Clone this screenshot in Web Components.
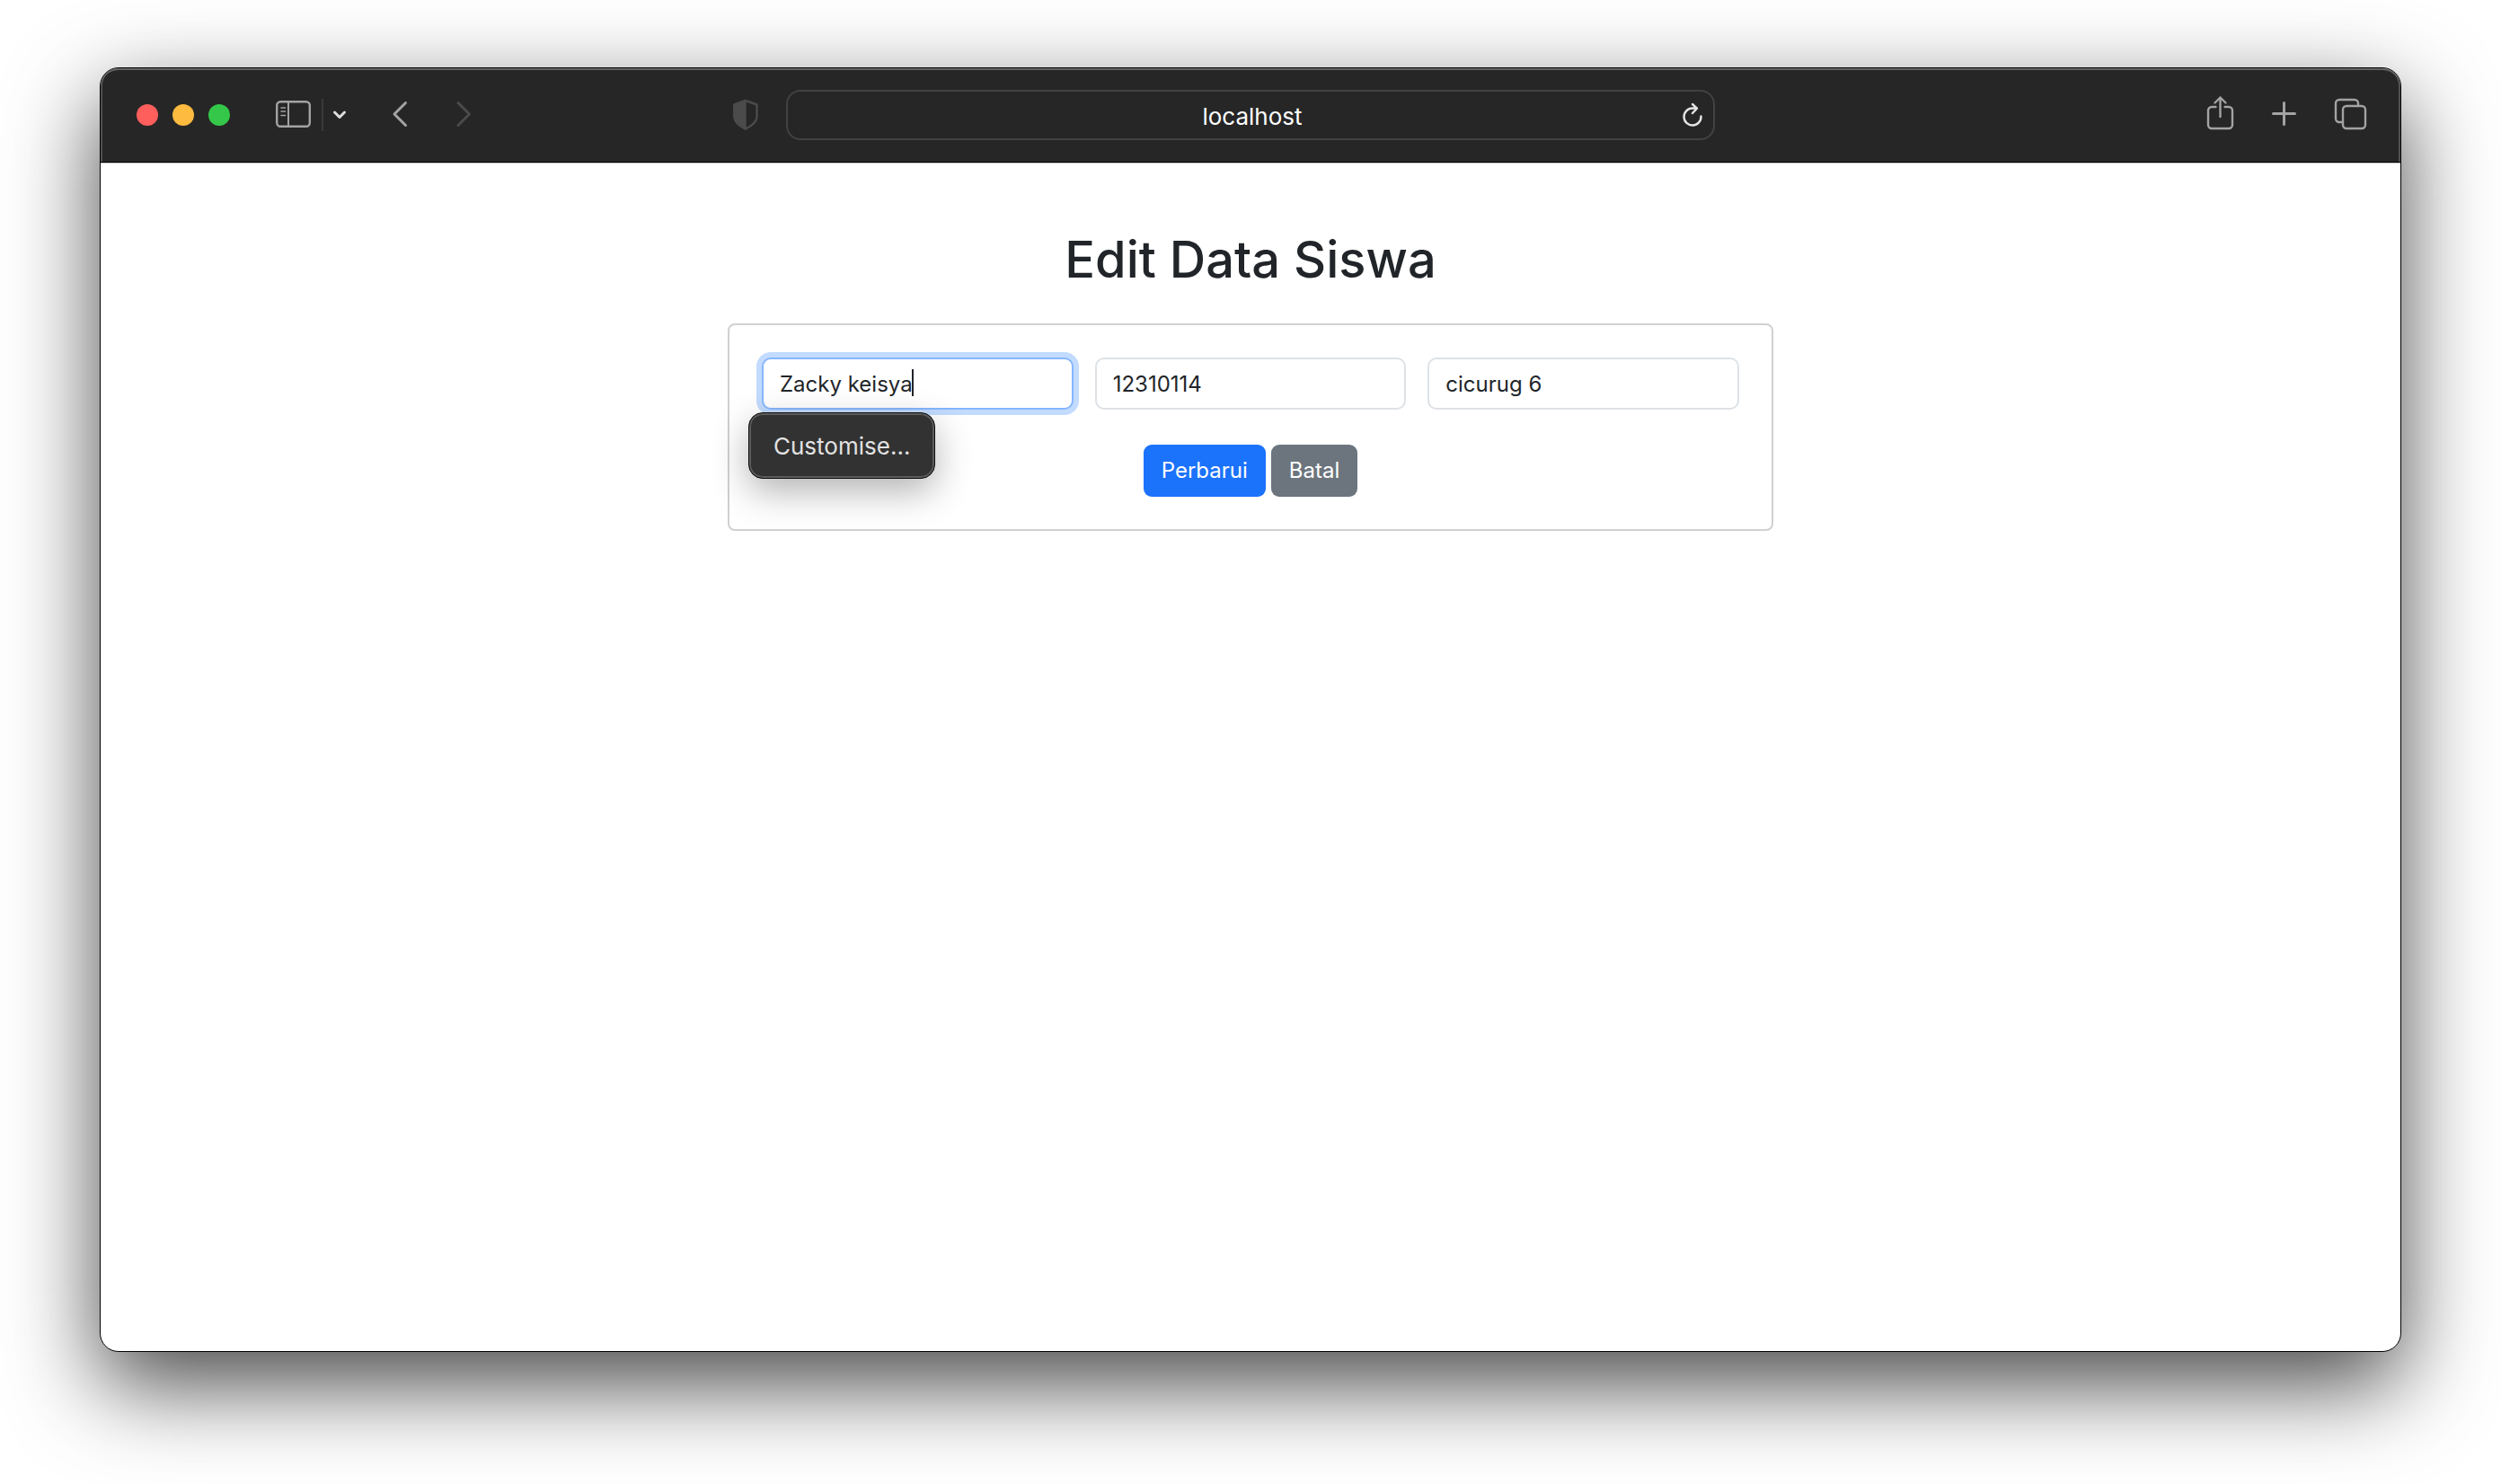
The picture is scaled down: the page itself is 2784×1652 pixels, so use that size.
<!DOCTYPE html>
<html lang="id">
<head>
<meta charset="utf-8">
<meta name="viewport" content="width=device-width, initial-scale=1">
<title>Edit Data Siswa</title>
<style>
  html { background: #fff; }
  body {
    margin: 0;
    min-height: 100vh;
    box-sizing: border-box;
    padding: 75px 111px 147px;
    display: flex;
    flex-direction: column;
    font-family: Inter, "Liberation Sans", sans-serif;
    font-size: 24px;
    line-height: 36px;
    color: #212529;
    overflow: hidden;
  }
</style>
</head>
<body>
<browser-window>
  <browser-toolbar slot="toolbar" address="localhost"></browser-toolbar>
  <student-form heading="Edit Data Siswa">
    <text-field label="Nama" value="Zacky keisya" active>
      <autofill-menu slot="menu">Customise…</autofill-menu>
    </text-field>
    <text-field label="NIS" value="12310114"></text-field>
    <text-field label="Rayon" value="cicurug 6"></text-field>
    <action-button slot="actions" variant="primary">Perbarui</action-button>
    <action-button slot="actions" variant="secondary">Batal</action-button>
  </student-form>
</browser-window>

<script>
  class BaseElement extends HTMLElement {
    constructor() {
      super();
      this.attachShadow({ mode: "open" });
    }
    connectedCallback() {
      this.shadowRoot.innerHTML = this.render();
      this.ready();
    }
    ready() {}
  }

  customElements.define("browser-window", class extends BaseElement {
    render() {
      return `
        <style>
          :host {
            flex: 1;
            display: flex;
            flex-direction: column;
            border: 1px solid #000;
            border-radius: 21px;
            background: #fff;
            box-shadow: 0 36px 100px rgba(0, 0, 0, .72);
          }
          main { flex: 1; padding: 72px 24px; }
        </style>
        <slot name="toolbar"></slot>
        <main><slot></slot></main>`;
    }
  });

  customElements.define("browser-toolbar", class extends BaseElement {
    render() {
      return `
        <style>
          :host {
            display: grid;
            grid-template-columns: 1fr minmax(0, 1034px) 1fr;
            align-items: center;
            height: 104px;
            background: #262626;
            border-radius: 20px 20px 0 0;
            border-bottom: 1px solid #000;
            box-shadow: inset 0 2px #646464, inset 2px 0 #505050, inset -2px 0 #505050, 0 1px #bfbfbf;
            color: #a3a3a3;
          }
          .side { display: flex; align-items: center; }
          .start { padding-left: 40px; padding-right: 31px; }
          .end { justify-content: flex-end; gap: 40px; padding-right: 36px; }
          .lights { display: flex; gap: 16px; margin-right: 51px; }
          .lights i { width: 24px; height: 24px; border-radius: 50%; }
          .red { background: #ff5f5c; }
          .yellow { background: #fdbb40; }
          .green { background: #34c749; }
          button { display: block; margin: 0; padding: 0; border: 0; background: none; color: inherit; }
          svg { display: block; fill: none; stroke: currentColor; stroke-width: 2.4; stroke-linecap: round; stroke-linejoin: round; }
          .bold { stroke-width: 3; }
          .rule { width: 2px; height: 36px; margin: 0 10px; background: #3a3a3a; }
          .menu { color: #dedede; margin-right: 50px; }
          .back { margin-right: 54px; }
          .forward { color: #4b4b4b; }
          .shield { color: #4b4b4b; margin-left: auto; }
          .address {
            display: flex;
            align-items: center;
            box-sizing: border-box;
            height: 56px;
            padding: 0 10px;
            border: 2px solid #424242;
            border-radius: 16px;
            color: #e4e4e4;
          }
          input {
            flex: 1;
            min-width: 0;
            margin: 0;
            padding: 3px 0 0 28px;
            border: 0;
            outline: 0;
            background: none;
            color: #fff;
            font: 400 26px/36px Inter, "Liberation Sans", sans-serif;
            text-align: center;
          }
        </style>
        <div class="side start">
          <div class="lights"><i class="red"></i><i class="yellow"></i><i class="green"></i></div>
          <button aria-label="Sidebar"><svg width="41" height="44"><rect x="1.200" y="7.200" width="36.600" height="27.600" rx="4"/><path stroke-width="2" d="M14 7v28"/><path style="stroke-width:1.600" d="M6 14h4.500M6 18h4.500M6 22.500h4.500"/></svg></button>
          <div class="rule"></div>
          <button class="menu" aria-label="Tab groups"><svg class="bold" width="16" height="44"><path d="M2.500 19L8 24.500L13.500 19"/></svg></button>
          <button class="back" aria-label="Back"><svg class="bold" width="18" height="44"><path d="M15.500 8.500L3 21L15.500 33.500"/></svg></button>
          <button class="forward" aria-label="Forward"><svg class="bold" width="18" height="44"><path d="M2 8.500L14.500 21L2 33.500"/></svg></button>
          <button class="shield" aria-label="Privacy report"><svg width="28" height="44"><path d="M14 6L26.500 10.500V24C26.500 30 20 34.500 14 37.500C8 34.500 1.500 30 1.500 24V10.500Z"/><path fill="currentColor" d="M13.500 6V37.500C8 34.500 1.500 30 1.500 24V10.500Z"/></svg></button>
        </div>
        <div class="address">
          <input type="text" aria-label="Address" value="${this.getAttribute("address")}">
          <button aria-label="Reload"><svg width="24" height="44"><path d="M20.500 23.500A9.500 9.500 0 1 1 11 14.500H16M11 10L16 14.600L11 20"/></svg></button>
        </div>
        <div class="side end">
          <button aria-label="Share"><svg width="32" height="44"><path d="M10.500 13H6a4 4 0 0 0-4 4V33a4 4 0 0 0 4 4H25a4 4 0 0 0 4-4V17a4 4 0 0 0-4-4H20.500M15.500 24V2.500M9.500 8.500L15.500 2.500L21.500 8.500"/></svg></button>
          <button aria-label="New tab"><svg class="bold" width="30" height="44"><path d="M2.500 20.500H26.500M14.500 8.500V32.500"/></svg></button>
          <button aria-label="Show tabs"><svg width="38" height="44"><rect x="10" y="12" width="25" height="25" rx="4"/><path d="M10 30H6a4 4 0 0 1-4-4V9a4 4 0 0 1 4-4H23a4 4 0 0 1 4 4V12"/></svg></button>
        </div>`;
    }
  });

  customElements.define("student-form", class extends BaseElement {
    render() {
      return `
        <style>
          :host { display: block; max-width: 1164px; margin: 0 auto; }
          h1 { margin: 0 0 35px; font-size: 56px; line-height: 72px; font-weight: 500; text-align: center; }
          form { padding: 36px; border: 2px solid #d0d0d0; border-radius: 8px; }
          .fields { display: grid; grid-template-columns: repeat(3, minmax(0, 1fr)); gap: 24px; }
          .actions { display: flex; justify-content: center; gap: 6px; margin-top: 39px; }
        </style>
        <h1>${this.getAttribute("heading")}</h1>
        <form>
          <div class="fields"><slot></slot></div>
          <div class="actions"><slot name="actions"></slot></div>
        </form>`;
    }
  });

  customElements.define("text-field", class extends BaseElement {
    render() {
      return `
        <style>
          :host { display: block; position: relative; }
          input {
            display: block;
            box-sizing: border-box;
            width: 100%;
            height: 58px;
            margin: 0;
            padding: 0 18px;
            border: 2px solid #dee2e6;
            border-radius: 10px;
            outline: 0;
            background: #fff;
            color: #212529;
            font: 400 24px/36px Inter, "Liberation Sans", sans-serif;
          }
          :host([active]) input { border-color: #86b7fe; box-shadow: 0 0 0 6px #c2dbfe; }
          .caret { display: none; }
          :host([active]) .caret {
            display: block;
            position: absolute;
            top: 13px;
            left: calc(20px + var(--text-width, 0px));
            width: 2px;
            height: 30px;
            background: #212529;
          }
        </style>
        <input type="text" aria-label="${this.getAttribute("label")}" value="${this.getAttribute("value")}">
        <span class="caret"></span>
        <slot name="menu"></slot>`;
    }
    ready() {
      const input = this.shadowRoot.querySelector("input");
      const pen = document.createElement("canvas").getContext("2d");
      pen.font = getComputedStyle(input).font;
      this.style.setProperty("--text-width", Math.floor(pen.measureText(input.value).width) + "px");
    }
  });

  customElements.define("autofill-menu", class extends BaseElement {
    render() {
      return `
        <style>
          :host { display: block; position: absolute; top: 61px; left: -15px; z-index: 1; }
          button {
            display: block;
            margin: 0;
            padding: 18px 27px 16px;
            border: 1px solid #0c0c0c;
            border-radius: 16px;
            background: #323232;
            box-shadow: inset 0 0 0 2px #5c5c5c, 0 14px 40px rgba(0, 0, 0, .3);
            color: #e2e2e2;
            font: 400 26px/38px Inter, "Liberation Sans", sans-serif;
            white-space: nowrap;
          }
        </style>
        <button type="button"><slot></slot></button>`;
    }
  });

  customElements.define("action-button", class extends BaseElement {
    render() {
      return `
        <style>
          :host { display: block; --fill: #6c757d; }
          :host([variant="primary"]) { --fill: #1b72fb; }
          button {
            display: block;
            height: 58px;
            margin: 0;
            padding: 0 20px;
            border: 0;
            border-radius: 9px;
            background: var(--fill);
            color: #fff;
            font: 400 24px/36px Inter, "Liberation Sans", sans-serif;
          }
        </style>
        <button type="button"><slot></slot></button>`;
    }
  });
</script>
</body>
</html>
